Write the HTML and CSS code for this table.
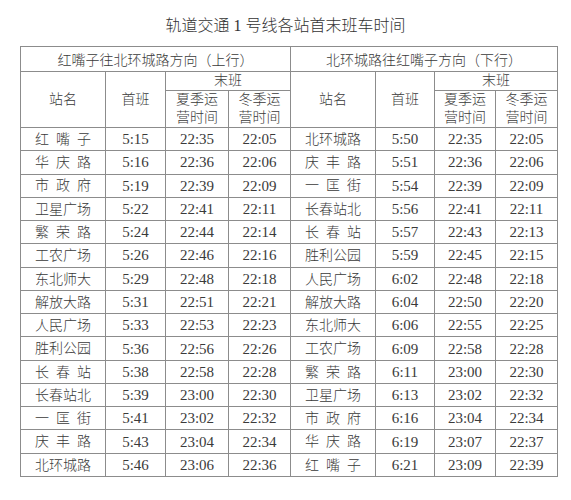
FILE: index.html
```html
<!DOCTYPE html>
<html lang="zh">
<head>
<meta charset="utf-8">
<link rel="stylesheet" href="styles.css">
</head>
<body>
<div class="page">
  <h1 class="title">轨道交通 1 号线各站首末班车时间</h1>
  <table class="tt">
    <colgroup>
      <col class="c1"><col class="c2"><col class="c3"><col class="c4">
      <col class="c5"><col class="c6"><col class="c7"><col class="c8">
    </colgroup>
    <thead>
      <tr class="h1">
        <th colspan="4">红嘴子往北环城路方向（上行）</th>
        <th colspan="4">北环城路往红嘴子方向（下行）</th>
      </tr>
      <tr class="h2">
        <th rowspan="2">站名</th>
        <th rowspan="2">首班</th>
        <th colspan="2">末班</th>
        <th rowspan="2">站名</th>
        <th rowspan="2">首班</th>
        <th colspan="2">末班</th>
      </tr>
      <tr class="h3">
        <th>夏季运<br>营时间</th>
        <th>冬季运<br>营时间</th>
        <th>夏季运<br>营时间</th>
        <th>冬季运<br>营时间</th>
      </tr>
    </thead>
    <tbody>
      <tr><td><span class="nm">红嘴子</span></td><td>5:15</td><td>22:35</td><td>22:05</td><td><span class="nm">北环城路</span></td><td>5:50</td><td>22:35</td><td>22:05</td></tr>
      <tr><td><span class="nm">华庆路</span></td><td>5:16</td><td>22:36</td><td>22:06</td><td><span class="nm">庆丰路</span></td><td>5:51</td><td>22:36</td><td>22:06</td></tr>
      <tr><td><span class="nm">市政府</span></td><td>5:19</td><td>22:39</td><td>22:09</td><td><span class="nm">一匡街</span></td><td>5:54</td><td>22:39</td><td>22:09</td></tr>
      <tr><td><span class="nm">卫星广场</span></td><td>5:22</td><td>22:41</td><td>22:11</td><td><span class="nm">长春站北</span></td><td>5:56</td><td>22:41</td><td>22:11</td></tr>
      <tr><td><span class="nm">繁荣路</span></td><td>5:24</td><td>22:44</td><td>22:14</td><td><span class="nm">长春站</span></td><td>5:57</td><td>22:43</td><td>22:13</td></tr>
      <tr><td><span class="nm">工农广场</span></td><td>5:26</td><td>22:46</td><td>22:16</td><td><span class="nm">胜利公园</span></td><td>5:59</td><td>22:45</td><td>22:15</td></tr>
      <tr><td><span class="nm">东北师大</span></td><td>5:29</td><td>22:48</td><td>22:18</td><td><span class="nm">人民广场</span></td><td>6:02</td><td>22:48</td><td>22:18</td></tr>
      <tr><td><span class="nm">解放大路</span></td><td>5:31</td><td>22:51</td><td>22:21</td><td><span class="nm">解放大路</span></td><td>6:04</td><td>22:50</td><td>22:20</td></tr>
      <tr><td><span class="nm">人民广场</span></td><td>5:33</td><td>22:53</td><td>22:23</td><td><span class="nm">东北师大</span></td><td>6:06</td><td>22:55</td><td>22:25</td></tr>
      <tr><td><span class="nm">胜利公园</span></td><td>5:36</td><td>22:56</td><td>22:26</td><td><span class="nm">工农广场</span></td><td>6:09</td><td>22:58</td><td>22:28</td></tr>
      <tr><td><span class="nm">长春站</span></td><td>5:38</td><td>22:58</td><td>22:28</td><td><span class="nm">繁荣路</span></td><td>6:11</td><td>23:00</td><td>22:30</td></tr>
      <tr><td><span class="nm">长春站北</span></td><td>5:39</td><td>23:00</td><td>22:30</td><td><span class="nm">卫星广场</span></td><td>6:13</td><td>23:02</td><td>22:32</td></tr>
      <tr><td><span class="nm">一匡街</span></td><td>5:41</td><td>23:02</td><td>22:32</td><td><span class="nm">市政府</span></td><td>6:16</td><td>23:04</td><td>22:34</td></tr>
      <tr><td><span class="nm">庆丰路</span></td><td>5:43</td><td>23:04</td><td>22:34</td><td><span class="nm">华庆路</span></td><td>6:19</td><td>23:07</td><td>22:37</td></tr>
      <tr><td><span class="nm">北环城路</span></td><td>5:46</td><td>23:06</td><td>22:36</td><td><span class="nm">红嘴子</span></td><td>6:21</td><td>23:09</td><td>22:39</td></tr>
    </tbody>
  </table>
</div>
</body>
</html>
```
FILE: styles.css
```css
html, body {
  margin: 0;
  padding: 0;
  background: #ffffff;
}
body {
  font-family: "Liberation Serif", "Noto Sans CJK SC", serif;
  color: #3a3a3a;
}
.page {
  width: 571px;
  height: 500px;
  padding-top: 15px;
  box-sizing: border-box;
}
.title {
  margin: 0 0 9px 0;
  font-size: 16px;
  line-height: 22px;
  font-weight: 300;
  text-align: center;
  color: #333333;
}
.tt {
  margin-left: 20px;
  border-collapse: collapse;
  table-layout: fixed;
  width: 537px;
  font-size: 15px;
  font-weight: 300;
}
.c1, .c5 { width: 85px; }
.c2 { width: 60px; }
.c3 { width: 63px; }
.c4 { width: 62px; }
.c6 { width: 59px; }
.c7 { width: 61px; }
.c8 { width: 62px; }
.tt th, .tt td {
  border: 1px solid #8c8c8c;
  padding: 0;
  text-align: center;
  vertical-align: middle;
  font-weight: 300;
}
.tt th { font-size: 14px; }
.h1 th { height: 24px; }
.h2 th { height: 18px; line-height: 18px; }
.h3 th { height: 35px; line-height: 18px; }
.tt tbody td { height: 22.27px; line-height: 20px; }
.nm {
  display: inline-block;
  width: 56px;
  font-size: 14px;
  text-align: justify;
  text-align-last: justify;
  vertical-align: middle;
}
```
